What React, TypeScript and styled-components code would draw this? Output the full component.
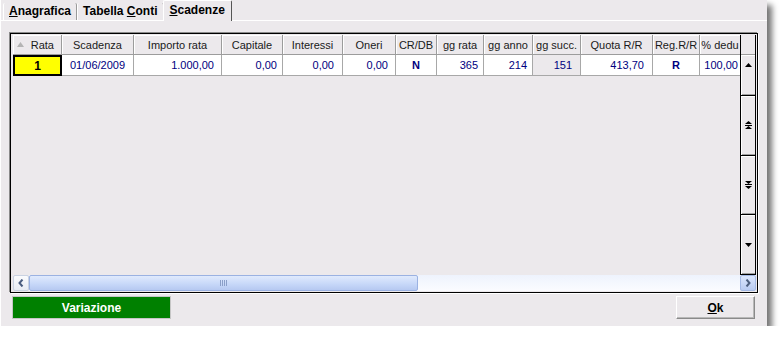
import React, {FunctionComponent} from 'react';
import styled, {createGlobalStyle} from 'styled-components';

const panelColor = '#ECE9EC';
const navy = '#000080';
const uiFont = `'Liberation Sans', Arial, sans-serif`;

const GlobalStyle = createGlobalStyle`
    html, body {
        margin: 0;
        padding: 0;
        background: #ffffff;
        font-family: ${uiFont};
    }
    * {
        box-sizing: border-box;
    }
`;

interface Column {
    title: string;
    width: number;
    value: string;
    align?: 'left' | 'center' | 'right';
    pr?: number;
    bold?: boolean;
    shaded?: boolean;
}

const columns: Column[] = [
    {title: 'Rata', width: 49, value: '1', align: 'center', bold: true},
    {title: 'Scadenza', width: 72, value: '01/06/2009', align: 'center'},
    {title: 'Importo rata', width: 88, value: '1.000,00', pr: 7},
    {title: 'Capitale', width: 61, value: '0,00', pr: 5},
    {title: 'Interessi', width: 60, value: '0,00', pr: 8},
    {title: 'Oneri', width: 53, value: '0,00', pr: 7},
    {title: 'CR/DB', width: 41, value: 'N', align: 'center', bold: true},
    {title: 'gg rata', width: 47, value: '365', pr: 5},
    {title: 'gg anno', width: 49, value: '214', pr: 5},
    {title: 'gg succ.', width: 48, value: '151', pr: 8, shaded: true},
    {title: 'Quota R/R', width: 72, value: '413,70', pr: 8},
    {title: 'Reg.R/R', width: 47, value: 'R', align: 'center', bold: true},
    {title: '% dedu', width: 41, value: '100,00', pr: 2}
];

const Window = styled.div`
    width: 767px;
    height: 326px;
    display: flex;
    flex-direction: column;
    background: ${panelColor};
    border-left: 1px solid #ffffff;
    box-shadow: 5px 5px 6px rgba(0, 0, 0, 0.55);
`;

const TabStrip = styled.div`
    height: 21px;
    display: flex;
    align-items: flex-end;
    padding-left: 2px;
    border-bottom: 1px solid #ffffff;
`;

const Tab = styled.div<{active?: boolean}>`
    position: relative;
    height: ${props => (props.active ? 21 : 17)}px;
    margin-bottom: ${props => (props.active ? -1 : 0)}px;
    margin-left: ${props => (props.active ? -1 : 0)}px;
    padding: ${props => (props.active ? '2px 6px 0' : '1px 5px 0')};
    display: flex;
    align-items: flex-start;
    font-size: 12px;
    font-weight: bold;
    color: #000000;
    background: ${panelColor};
    border-left: 1px solid #ffffff;
    border-top: ${props => (props.active ? '1px solid #ffffff' : 'none')};
    border-right: 1px solid ${props => (props.active ? '#555555' : '#9a9a9a')};
    border-top-left-radius: 2px;
    border-top-right-radius: 2px;
    z-index: ${props => (props.active ? 1 : 0)};

    u {
        text-decoration: underline;
        text-underline-offset: 1px;
    }
`;

const Content = styled.div`
    flex: 1;
    display: flex;
    flex-direction: column;
    padding: 12px 9px 0 8px;
`;

const Grid = styled.div`
    height: 260px;
    display: grid;
    grid-template-columns: 1fr 16px;
    grid-template-rows: 1fr 16px;
    padding: 1px 1px 1px 1px;
    border: 1px solid #000000;
    box-shadow: -1px -1px 0 #8a8a8a, 1px 1px 0 #ffffff;
    margin-left: 1px;
    background: ${panelColor};
`;

const Table = styled.div`
    display: flex;
    flex-direction: column;
    padding-left: 1px;
    overflow: hidden;
`;

const Row = styled.div`
    display: flex;
`;

const HeadCell = styled.div<{w: number}>`
    width: ${props => props.w}px;
    height: 20px;
    flex: none;
    display: flex;
    align-items: center;
    justify-content: center;
    font-size: 11px;
    color: #1a1a1a;
    background: ${panelColor};
    border-right: 1px solid #9c9c9c;
    border-bottom: 1px solid #9c9c9c;
    box-shadow: inset 1px 1px 0 #ffffff;
    white-space: nowrap;
`;

const RataHead = styled(HeadCell)`
    justify-content: space-between;
    padding: 0 7px 0 4px;
`;

const DataCell = styled.div<{w: number; align: string; pr: number; bold?: boolean; shaded?: boolean}>`
    width: ${props => props.w}px;
    height: 21px;
    flex: none;
    display: flex;
    align-items: center;
    justify-content: ${props =>
        props.align === 'center' ? 'center' : props.align === 'left' ? 'flex-start' : 'flex-end'};
    padding-right: ${props => (props.align === 'right' ? props.pr : 0)}px;
    font-size: 11px;
    font-weight: ${props => (props.bold ? 'bold' : 'normal')};
    color: ${navy};
    background: ${props => (props.shaded ? panelColor : '#ffffff')};
    border-right: 1px solid #a8a8a8;
    border-bottom: 1px solid #a8a8a8;
`;

const CurrentCell = styled(DataCell)`
    background: #ffff00;
    color: #000000;
    border: 2px solid #000000;
    font-size: 12px;
`;

const VScroll = styled.div`
    display: flex;
    flex-direction: column;
    border-left: 1px solid #000000;
    border-right: 1px solid #000000;
`;

const VCorner = styled.div`
    height: 20px;
    flex: none;
    background: ${panelColor};
    border-bottom: 1px solid #9c9c9c;
`;

const VButton = styled.div<{first?: boolean}>`
    flex: ${props => (props.first ? '0 0 41px' : '1 1 0')};
    display: flex;
    justify-content: center;
    align-items: ${props => (props.first ? 'flex-start' : 'center')};
    padding-top: ${props => (props.first ? 8 : 0)}px;
    background: ${panelColor};
    border-bottom: 1px solid #000000;
    box-shadow: inset 1px 1px 0 #ffffff, inset 0 -1px 0 #a0a0a0;
`;

const HScroll = styled.div`
    grid-column: 1 / span 2;
    display: flex;
    padding-left: 1px;
`;

const ArrowButton = styled.div<{blue?: boolean}>`
    width: 16px;
    height: 16px;
    flex: none;
    display: flex;
    align-items: center;
    justify-content: center;
    border: 1px solid ${props => (props.blue ? '#a3b8e4' : '#c9d2e2')};
    border-radius: 2px;
    background: ${props =>
        props.blue ? 'linear-gradient(180deg, #dbe6fd 0%, #b9cbf2 100%)' : 'linear-gradient(180deg, #fafbfd 0%, #e8ecf4 100%)'};
`;

const Track = styled.div`
    flex: 1;
    display: flex;
    background: linear-gradient(180deg, #eef3fd 0%, #fbfcff 100%);
`;

const Thumb = styled.div`
    width: 389px;
    display: flex;
    align-items: center;
    justify-content: center;
    border: 1px solid #9bb2e2;
    border-radius: 2px;
    background: linear-gradient(180deg, #e0eafd 0%, #c6d7f8 60%, #b6c9f1 100%);
`;

const Grip = styled.div`
    width: 8px;
    height: 6px;
    background: repeating-linear-gradient(90deg, #8b9fc8 0 1px, transparent 1px 2px);
`;

const Footer = styled.div`
    display: flex;
    justify-content: space-between;
    margin-top: 3px;
    padding: 0 3px 0 3px;
`;

const ActionButton = styled.div<{green?: boolean}>`
    width: ${props => (props.green ? 159 : 79)}px;
    height: 23px;
    display: flex;
    align-items: center;
    justify-content: center;
    font-size: 12px;
    font-weight: bold;
    color: ${props => (props.green ? '#ffffff' : '#000000')};
    background: ${props => (props.green ? '#008000' : panelColor)};
    border: 1px solid ${props => (props.green ? '#c6c6c6' : '#ffffff')};
    border-right-color: ${props => (props.green ? '#c6c6c6' : '#8a8a8a')};
    border-bottom-color: ${props => (props.green ? '#c6c6c6' : '#8a8a8a')};
    box-shadow: ${props => (props.green ? 'none' : 'inset -1px -1px 0 #b8b8b8')};

    u {
        text-decoration: underline;
        text-underline-offset: 1px;
    }
`;

const SortIcon = () => (
    <svg width="7" height="5" viewBox="0 0 7 5">
        <path d="M3.5 0 L7 5 L0 5 Z" fill="#b4b4b4" />
    </svg>
);

const Glyph: FunctionComponent<{kind: 'up' | 'fastUp' | 'fastDown' | 'down'}> = ({kind}) => {
    if (kind === 'up') {
        return (
            <svg width="7" height="4" viewBox="0 0 7 4">
                <path d="M3.5 0 L7 4 L0 4 Z" fill="#000" />
            </svg>
        );
    }
    if (kind === 'down') {
        return (
            <svg width="7" height="4" viewBox="0 0 7 4">
                <path d="M0 0 L7 0 L3.5 4 Z" fill="#000" />
            </svg>
        );
    }
    if (kind === 'fastUp') {
        return (
            <svg width="7" height="8" viewBox="0 0 7 8">
                <path d="M3.5 0 L7 3 L0 3 Z" fill="#000" />
                <rect x="0" y="4" width="7" height="1" fill="#000" />
                <path d="M3.5 5 L7 8 L0 8 Z" fill="#000" />
            </svg>
        );
    }
    return (
        <svg width="7" height="8" viewBox="0 0 7 8">
            <path d="M0 0 L7 0 L3.5 3 Z" fill="#000" />
            <rect x="0" y="3" width="7" height="1" fill="#000" />
            <path d="M0 5 L7 5 L3.5 8 Z" fill="#000" />
        </svg>
    );
};

const Chevron: FunctionComponent<{dir: 'left' | 'right'; color: string}> = ({dir, color}) => (
    <svg width="6" height="8" viewBox="0 0 6 8">
        <path
            d={dir === 'left' ? 'M4.5 0.5 L1.5 4 L4.5 7.5' : 'M1.5 0.5 L4.5 4 L1.5 7.5'}
            stroke={color}
            strokeWidth="2"
            fill="none"
        />
    </svg>
);

const App: FunctionComponent = () => {
    return (
        <>
            <GlobalStyle />
            <Window>
                <TabStrip>
                    <Tab>
                        <span>
                            <u>A</u>nagrafica
                        </span>
                    </Tab>
                    <Tab>
                        <span>
                            Tabella <u>C</u>onti
                        </span>
                    </Tab>
                    <Tab active>
                        <span>
                            <u>S</u>cadenze
                        </span>
                    </Tab>
                </TabStrip>
                <Content>
                    <Grid>
                        <Table>
                            <Row>
                                {columns.map((col, i) =>
                                    i === 0 ? (
                                        <RataHead w={col.width} key={col.title}>
                                            <SortIcon />
                                            <span>{col.title}</span>
                                        </RataHead>
                                    ) : (
                                        <HeadCell w={col.width} key={col.title}>
                                            {col.title}
                                        </HeadCell>
                                    )
                                )}
                            </Row>
                            <Row>
                                {columns.map((col, i) => {
                                    const Cell = i === 0 ? CurrentCell : DataCell;
                                    return (
                                        <Cell
                                            key={col.title}
                                            w={col.width}
                                            align={col.align ?? 'right'}
                                            pr={col.pr ?? 6}
                                            bold={col.bold}
                                            shaded={col.shaded}
                                        >
                                            {col.value}
                                        </Cell>
                                    );
                                })}
                            </Row>
                        </Table>
                        <VScroll>
                            <VCorner />
                            <VButton first>
                                <Glyph kind="up" />
                            </VButton>
                            <VButton>
                                <Glyph kind="fastUp" />
                            </VButton>
                            <VButton>
                                <Glyph kind="fastDown" />
                            </VButton>
                            <VButton>
                                <Glyph kind="down" />
                            </VButton>
                        </VScroll>
                        <HScroll>
                            <ArrowButton>
                                <Chevron dir="left" color="#4a5d80" />
                            </ArrowButton>
                            <Track>
                                <Thumb>
                                    <Grip />
                                </Thumb>
                            </Track>
                            <ArrowButton blue>
                                <Chevron dir="right" color="#4d5f7f" />
                            </ArrowButton>
                        </HScroll>
                    </Grid>
                    <Footer>
                        <ActionButton green>Variazione</ActionButton>
                        <ActionButton>
                            <span>
                                <u>O</u>k
                            </span>
                        </ActionButton>
                    </Footer>
                </Content>
            </Window>
        </>
    );
};

export default App;
